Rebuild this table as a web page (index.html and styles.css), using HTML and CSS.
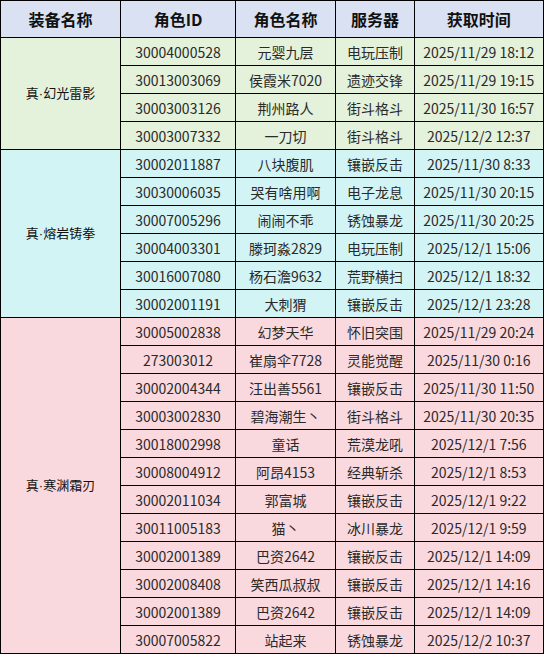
FILE: index.html
```html
<!DOCTYPE html>
<html lang="zh">
<head>
<meta charset="utf-8">
<link rel="stylesheet" href="styles.css">
</head>
<body>
<table class="sheet">
<colgroup>
<col class="c1"><col class="c2"><col class="c3"><col class="c4"><col class="c5">
</colgroup>
<thead>
<tr class="hrow"><th>装备名称</th><th>角色ID</th><th>角色名称</th><th>服务器</th><th>获取时间</th></tr>
</thead>
<tbody class="g1">
<tr><td rowspan="4" class="grp">真<span class="dot">·</span>幻光雷影</td><td>30004000528</td><td>元婴九层</td><td>电玩压制</td><td>2025/11/29 18:12</td></tr>
<tr><td>30013003069</td><td>侯霞米7020</td><td>遗迹交锋</td><td>2025/11/29 19:15</td></tr>
<tr><td>30003003126</td><td>荆州路人</td><td>街斗格斗</td><td>2025/11/30 16:57</td></tr>
<tr><td>30003007332</td><td>一刀切</td><td>街斗格斗</td><td>2025/12/2 12:37</td></tr>
</tbody>
<tbody class="g2">
<tr><td rowspan="6" class="grp">真<span class="dot">·</span>熔岩铸拳</td><td>30002011887</td><td>八块腹肌</td><td>镶嵌反击</td><td>2025/11/30 8:33</td></tr>
<tr><td>30030006035</td><td>哭有啥用啊</td><td>电子龙息</td><td>2025/11/30 20:15</td></tr>
<tr><td>30007005296</td><td>闹闹不乖</td><td>锈蚀暴龙</td><td>2025/11/30 20:25</td></tr>
<tr><td>30004003301</td><td>滕珂淼2829</td><td>电玩压制</td><td>2025/12/1 15:06</td></tr>
<tr><td>30016007080</td><td>杨石澹9632</td><td>荒野横扫</td><td>2025/12/1 18:32</td></tr>
<tr><td>30002001191</td><td>大刺猬</td><td>镶嵌反击</td><td>2025/12/1 23:28</td></tr>
</tbody>
<tbody class="g3">
<tr><td rowspan="12" class="grp">真<span class="dot">·</span>寒渊霜刃</td><td>30005002838</td><td>幻梦天华</td><td>怀旧突围</td><td>2025/11/29 20:24</td></tr>
<tr><td>273003012</td><td>崔扇伞7728</td><td>灵能觉醒</td><td>2025/11/30 0:16</td></tr>
<tr><td>30002004344</td><td>汪出善5561</td><td>镶嵌反击</td><td>2025/11/30 11:50</td></tr>
<tr><td>30003002830</td><td>碧海潮生丶</td><td>街斗格斗</td><td>2025/11/30 20:35</td></tr>
<tr><td>30018002998</td><td>童话</td><td>荒漠龙吼</td><td>2025/12/1 7:56</td></tr>
<tr><td>30008004912</td><td>阿昂4153</td><td>经典斩杀</td><td>2025/12/1 8:53</td></tr>
<tr><td>30002011034</td><td>郭富城</td><td>镶嵌反击</td><td>2025/12/1 9:22</td></tr>
<tr><td>30011005183</td><td>猫丶</td><td>冰川暴龙</td><td>2025/12/1 9:59</td></tr>
<tr><td>30002001389</td><td>巴资2642</td><td>镶嵌反击</td><td>2025/12/1 14:09</td></tr>
<tr><td>30002008408</td><td>笑西瓜叔叔</td><td>镶嵌反击</td><td>2025/12/1 14:16</td></tr>
<tr><td>30002001389</td><td>巴资2642</td><td>镶嵌反击</td><td>2025/12/1 14:09</td></tr>
<tr><td>30007005822</td><td>站起来</td><td>锈蚀暴龙</td><td>2025/12/2 10:37</td></tr>
</tbody>
</table>
</body>
</html>
```
FILE: styles.css
```css
html, body {
  margin: 0;
  padding: 0;
  background: #ffffff;
}
.sheet {
  border-collapse: collapse;
  table-layout: fixed;
  width: 543px;
  font-family: "Noto Sans CJK SC", "Noto Sans", sans-serif;
  color: #2a2a2a;
  font-size: 14px;
}
.c1 { width: 120px; }
.c2 { width: 115px; }
.c3 { width: 100px; }
.c4 { width: 79px; }
.c5 { width: 129px; }
.sheet th, .sheet td {
  border: 1px solid #000000;
  padding: 0;
  text-align: center;
  vertical-align: middle;
  white-space: nowrap;
  overflow: hidden;
  line-height: 18px;
}
.sheet tr { height: 28px; }
.sheet tr.hrow { height: 37px; }
.sheet th {
  background: #d9e1f2;
  font-size: 16px;
  font-weight: 700;
  color: #111111;
}
.sheet td.grp {
  font-size: 13px;
  color: #111111;
}
.dot {
  font-family: "Liberation Sans", sans-serif;
  font-size: 13px;
}
.g1 td { background: #e4f1db; }
.g2 td { background: #d3f4f4; }
.g3 td { background: #fad9de; }
.sheet td:last-child, .sheet th:last-child { border-right-width: 2px; }
```
